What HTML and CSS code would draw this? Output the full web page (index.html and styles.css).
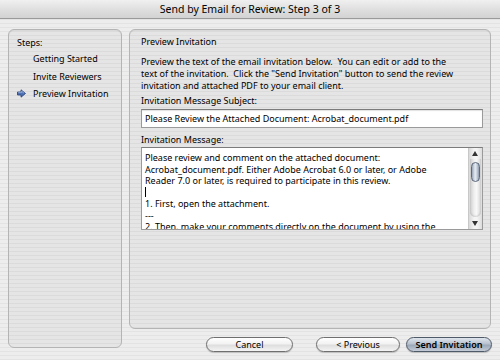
FILE: index.html
```html
<!DOCTYPE html>
<html>
<head>
<meta charset="utf-8">
<link rel="stylesheet" href="styles.css">
</head>
<body>
<div class="window">
  <div class="titlebar">Send by Email for Review: Step 3 of 3</div>
  <div class="content">
    <aside class="panel steps">
      <div class="steps-label">Steps:</div>
      <ul class="step-list">
        <li>Getting Started</li>
        <li>Invite Reviewers</li>
        <li class="current"><svg class="arrow" viewBox="0 0 9 9" width="9" height="9"><path d="M0.5 3 H4 V0.8 L8.5 4.5 L4 8.2 V6 H0.5 Z" fill="#4c6fb4" stroke="#243f7a" stroke-width="0.8" stroke-linejoin="round"/><path d="M1.2 3.6 H4.6 V2.2 L7 4.2" fill="none" stroke="#a9c0ea" stroke-width="0.7"/></svg>Preview Invitation</li>
      </ul>
    </aside>
    <section class="panel main">
      <h1 class="heading">Preview Invitation</h1>
      <p class="intro">Preview the text of the email invitation below.&nbsp; You can edit or add to the<br>text of the invitation.&nbsp; Click the "Send Invitation" button to send the review<br>invitation and attached PDF to your email client.</p>
      <div class="label">Invitation Message Subject:</div>
      <div class="field">Please Review the Attached Document: Acrobat_document.pdf</div>
      <div class="label label-msg">Invitation Message:</div>
      <div class="textarea">
        <div class="ta-text">Please review and comment on the attached document:<br>Acrobat_document.pdf. Either Adobe Acrobat 6.0 or later, or Adobe<br>Reader 7.0 or later, is required to participate in this review.<br><span class="caret"></span><br>1. First, open the attachment.<br>---<br>2. Then, make your comments directly on the document by using the</div>
        <div class="scrollbar">
          <div class="sb-arrow sb-up"></div>
          <div class="sb-track"><div class="sb-thumb"></div></div>
          <div class="sb-arrow sb-down"></div>
        </div>
      </div>
    </section>
    <div class="buttons">
      <button class="btn btn-cancel">Cancel</button>
      <button class="btn btn-prev">&lt; Previous</button>
      <button class="btn btn-default">Send Invitation</button>
    </div>
  </div>
</div>
</body>
</html>
```

FILE: styles.css
```css
* { box-sizing: border-box; }
html, body {
  margin: 0;
  padding: 0;
}
body {
  width: 500px;
  height: 360px;
  overflow: hidden;
  font-family: "Noto Sans", "DejaVu Sans", sans-serif;
  font-size: 9px;
  color: #000;
  background-color: #ececec;
  background-image: repeating-linear-gradient(to bottom, #ededed 0, #ededed 3px, #e3e3e3 3px, #e3e3e3 4px);
}
.window {
  width: 500px;
  height: 360px;
  display: flex;
  flex-direction: column;
}
.titlebar {
  height: 19px;
  flex: none;
  border-bottom: 1px solid #9a9a9a;
  background: linear-gradient(to bottom, #f0f0f0 0%, #e0e0e0 50%, #d2d2d2 100%);
  text-align: center;
  font-size: 10.5px;
  line-height: 18px;
  color: #000;
}
.content {
  display: grid;
  grid-template-columns: 114px 362px;
  grid-template-rows: 300px 15px;
  column-gap: 7px;
  row-gap: 8px;
  padding: 10px 0 0 8px;
}
.panel {
  border: 1px solid #b4b4b4;
  border-radius: 6px;
  background: rgba(0, 0, 0, 0.03);
  box-shadow: inset 0 1px 0 rgba(0,0,0,0.05);
}
.steps {
  grid-column: 1;
  grid-row: 1 / 3;
  height: 319px;
  align-self: start;
  padding: 7px 0 0 8px;
}
.steps-label {
  line-height: 12px;
}
.step-list {
  list-style: none;
  margin: 1px 0 0 0;
  padding: 0 0 0 16px;
}
.step-list li {
  line-height: 17.5px;
  position: relative;
}
.arrow {
  position: absolute;
  left: -16px;
  top: 4px;
}
.main {
  grid-column: 2;
  grid-row: 1;
  padding: 6px 8px 0 11px;
}
.heading {
  margin: 0;
  font-size: 9px;
  font-weight: normal;
  line-height: 12px;
}
.intro {
  margin: 8px 0 0 0;
  line-height: 12px;
  white-space: nowrap;
}
.label {
  margin-top: 3px;
  line-height: 12px;
}
.label-msg {
  margin-top: 6px;
}
.field {
  margin-top: 2px;
  width: 342px;
  height: 19px;
  border: 1px solid #9a9a9a;
  border-top-color: #7c7c7c;
  background: #fff;
  padding: 0 3px;
  line-height: 17px;
  box-shadow: inset 0 1px 1px rgba(0,0,0,0.12);
}
.textarea {
  margin-top: 1px;
  width: 342px;
  height: 83px;
  border: 1px solid #9a9a9a;
  border-top-color: #7c7c7c;
  background: #fff;
  display: flex;
  overflow: hidden;
}
.ta-text {
  flex: 1;
  padding: 4px 0 0 3px;
  line-height: 11.5px;
  white-space: nowrap;
  overflow: hidden;
}
.caret {
  display: inline-block;
  width: 1px;
  height: 10px;
  background: #000;
  vertical-align: -1px;
}
.scrollbar {
  width: 14px;
  flex: none;
  display: flex;
  flex-direction: column;
  background: linear-gradient(to right, #d9d9d9, #f4f4f4 40%, #f4f4f4 60%, #dddddd);
  border-left: 1px solid #c8c8c8;
}
.sb-arrow {
  height: 11px;
  flex: none;
  position: relative;
}
.sb-arrow::after {
  content: "";
  position: absolute;
  left: 3px;
  width: 0;
  height: 0;
  border-left: 3.5px solid transparent;
  border-right: 3.5px solid transparent;
}
.sb-up::after {
  top: 3px;
  border-bottom: 5px solid #333;
}
.sb-down::after {
  top: 3px;
  border-top: 5px solid #333;
}
.sb-track {
  flex: 1;
  position: relative;
  margin: 0 1px 1px 1px;
  border-radius: 0 0 6px 6px;
  background: linear-gradient(to right, #cfcfcf, #f0f0f0 40%, #f8f8f8 60%, #d5d5d5);
  box-shadow: inset 0 -1px 2px rgba(0,0,0,0.15);
}
.sb-thumb {
  position: absolute;
  left: 1px;
  right: 1px;
  top: 3px;
  height: 20px;
  border-radius: 6px;
  border: 1px solid #5d6a7c;
  background: linear-gradient(to right, #98a4b6, #e8edf4 45%, #c7d0dc 70%, #8c98aa);
}
.buttons {
  grid-column: 2;
  grid-row: 2;
  display: flex;
  justify-content: flex-end;
  margin-right: -1px;
}
.btn {
  height: 15px;
  padding: 0;
  border: 1px solid #6f6f6f;
  border-radius: 8px;
  font-family: "Noto Sans", "DejaVu Sans", sans-serif;
  font-size: 9px;
  line-height: 13px;
  color: #000;
  background: linear-gradient(to bottom, #ffffff 0%, #f2f2f2 45%, #dedede 55%, #f4f4f4 100%);
  box-shadow: 0 1px 1px rgba(0,0,0,0.2);
}
.btn-cancel { width: 87px; margin-right: 23px; }
.btn-prev { width: 84px; margin-right: 6px; }
.btn-default {
  width: 86px;
  font-weight: 600;
  border-color: #4f5a68;
  background: linear-gradient(to bottom, #dfe5ec 0%, #b9c3cf 45%, #9ba8b8 55%, #c4ccd7 100%);
}
```
